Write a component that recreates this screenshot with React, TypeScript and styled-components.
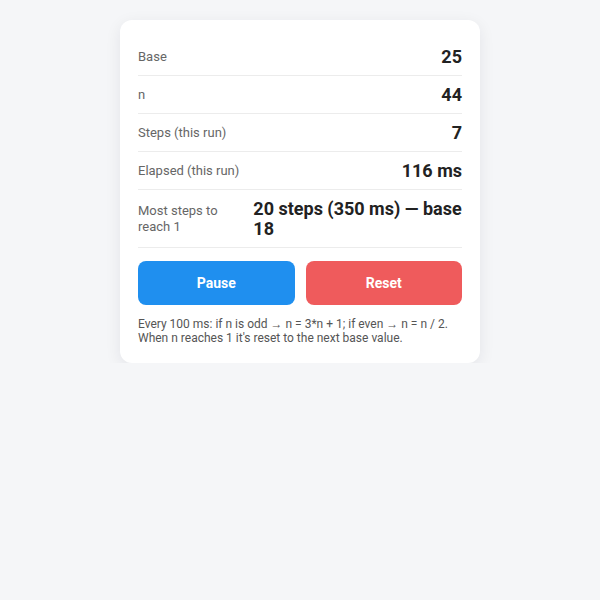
import * as React from 'react';
import styled, { createGlobalStyle } from 'styled-components';

const GlobalStyle = createGlobalStyle`
    html, body {
        margin: 0;
        padding: 0;
        background: #f5f6f8;
        font-family: Roboto, sans-serif;
    }
`;

const Page = styled.div`
    display: flex;
    justify-content: center;
    padding-top: 20px;
`;

const Card = styled.div`
    width: 360px;
    box-sizing: border-box;
    padding: 18px;
    background: #fff;
    border-radius: 12px;
    box-shadow: 0 4px 16px rgba(20, 30, 50, 0.08);
`;

const Row = styled.div`
    display: flex;
    justify-content: space-between;
    align-items: center;
    gap: 12px;
    padding: 9px 0 8px;
    border-bottom: 1px solid #ececec;
`;

const Label = styled.span`
    font-size: 13px;
    line-height: 16px;
    color: #666;
`;

// shrinks less than the label so long values keep most of the row
const Value = styled.span`
    flex-shrink: 0.6;
    font-size: 18px;
    line-height: 20px;
    font-weight: 700;
    color: #222;
`;

const Buttons = styled.div`
    display: grid;
    grid-template-columns: 1fr 1fr;
    gap: 11px;
    margin-top: 13px;
`;

const Button = styled.button<{ tone: 'blue' | 'red' }>`
    height: 44px;
    border: 0;
    border-radius: 8px;
    font-family: inherit;
    font-size: 14px;
    font-weight: 700;
    color: #fff;
    background: ${(p) => (p.tone === 'blue' ? '#1f8fef' : '#ef5b5c')};
`;

const Note = styled.p`
    margin: 12px 0 0;
    font-size: 12px;
    line-height: 14px;
    color: #555;
`;

const stats: [string, string][] = [
    ['Base', '25'],
    ['n', '44'],
    ['Steps (this run)', '7'],
    ['Elapsed (this run)', '116 ms'],
    ['Most steps to reach 1', '20 steps (350 ms) — base 18'],
];

export default function App() {
    return (
        <>
            <GlobalStyle />
            <Page>
                <Card>
                    {stats.map(([label, value]) => (
                        <Row key={label}>
                            <Label>{label}</Label>
                            <Value>{value}</Value>
                        </Row>
                    ))}
                    <Buttons>
                        <Button tone="blue">Pause</Button>
                        <Button tone="red">Reset</Button>
                    </Buttons>
                    <Note>
                        Every 100 ms: if n is odd → n = 3*n + 1; if even → n = n / 2. When n reaches 1 it's reset to the
                        next base value.
                    </Note>
                </Card>
            </Page>
        </>
    );
}
